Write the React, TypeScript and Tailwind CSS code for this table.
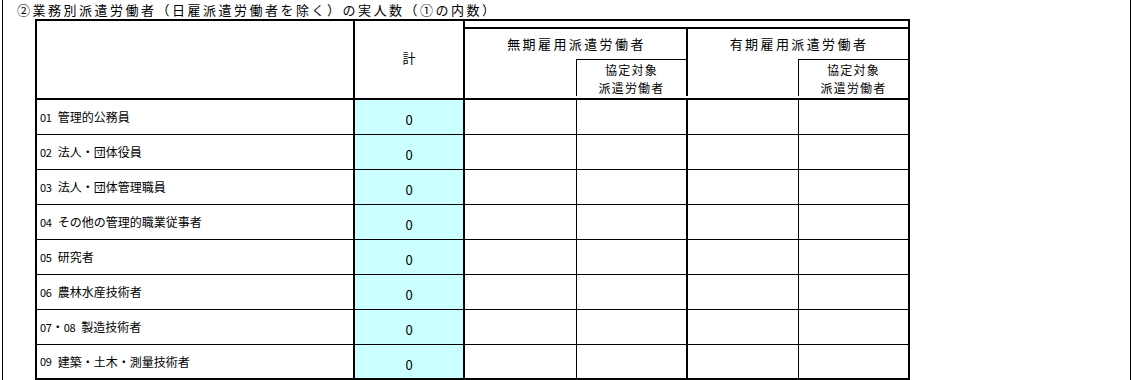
import React from "react";

const rows: [string, string][] = [
  ["01", "管理的公務員"],
  ["02", "法人・団体役員"],
  ["03", "法人・団体管理職員"],
  ["04", "その他の管理的職業従事者"],
  ["05", "研究者"],
  ["06", "農林水産技術者"],
  ["07・08", "製造技術者"],
  ["09", "建築・土木・測量技術者"],
];

function Code({ code }: { code: string }) {
  const parts = code.split("・");
  return (
    <span className="flex items-center">
      {parts.map((p, i) => (
        <React.Fragment key={i}>
          {i > 0 && <span className="text-[12px]">・</span>}
          <span className="text-[11px] tracking-[-0.3px]">{p}</span>
        </React.Fragment>
      ))}
    </span>
  );
}

function Group({ title, leftW }: { title: string; leftW: string }) {
  return (
    <div className="flex flex-col h-full">
      <div className="h-[30px] flex items-center justify-center text-[13px] tracking-[2.4px] pl-[2px]">
        {title}
      </div>
      <div className="flex h-[37px]">
        <div className={leftW} />
        <div className="w-[110px] border-t border-l border-black flex flex-col items-center justify-center text-[12px] leading-[18px] tracking-[1.2px] pt-[2px]">
          <span>協定対象</span>
          <span>派遣労働者</span>
        </div>
      </div>
    </div>
  );
}

export default function App() {
  return (
    <div
      className="w-[1132px] h-[380px] overflow-hidden bg-white text-black"
      style={{ fontFamily: '"Noto Sans CJK JP", "Noto Sans", sans-serif' }}
    >
      <div className="ml-[2px] w-[1129px] h-full border-x border-black">
        <div className="h-[19px] pl-[14px] text-[13px] leading-[19px] tracking-[2.5px] whitespace-nowrap">
          ②業務別派遣労働者（日雇派遣労働者を除く）の実人数（①の内数）
        </div>
        <div className="ml-[32px] w-[875px] border-2 border-black">
          {/* header */}
          <div className="flex h-[79px] border-b-2 border-black">
            <div className="w-[318px] border-r-2 border-black" />
            <div className="w-[110px] border-r-2 border-black flex items-center justify-center text-[13px] pb-[4px]">
              計
            </div>
            <div className="w-[443px] flex flex-col">
              <div className="h-[8px] border-b-2 border-black" />
              <div className="flex h-[67px]">
                <div className="w-[223px] border-r-2 border-black">
                  <Group title="無期雇用派遣労働者" leftW="w-[111px]" />
                </div>
                <div className="w-[220px]">
                  <Group title="有期雇用派遣労働者" leftW="w-[110px]" />
                </div>
              </div>
            </div>
          </div>
          {/* rows */}
          {rows.map(([code, name], i) => (
            <div
              key={code}
              className={
                i < rows.length - 1
                  ? "flex h-[35px] border-b border-black"
                  : "flex h-[33px]"
              }
            >
              <div className="w-[318px] border-r-2 border-black flex items-center gap-[6px] pl-[3px] text-[12px] whitespace-nowrap">
                <Code code={code} />
                <span>{name}</span>
              </div>
              <div className="w-[110px] border-r-2 border-black bg-[#ccffff] flex items-center justify-center text-[13px] pt-[6px]">
                0
              </div>
              <div className="w-[112px] border-r border-black" />
              <div className="w-[111px] border-r-2 border-black" />
              <div className="w-[111px] border-r border-black" />
              <div className="w-[109px]" />
            </div>
          ))}
        </div>
      </div>
    </div>
  );
}
